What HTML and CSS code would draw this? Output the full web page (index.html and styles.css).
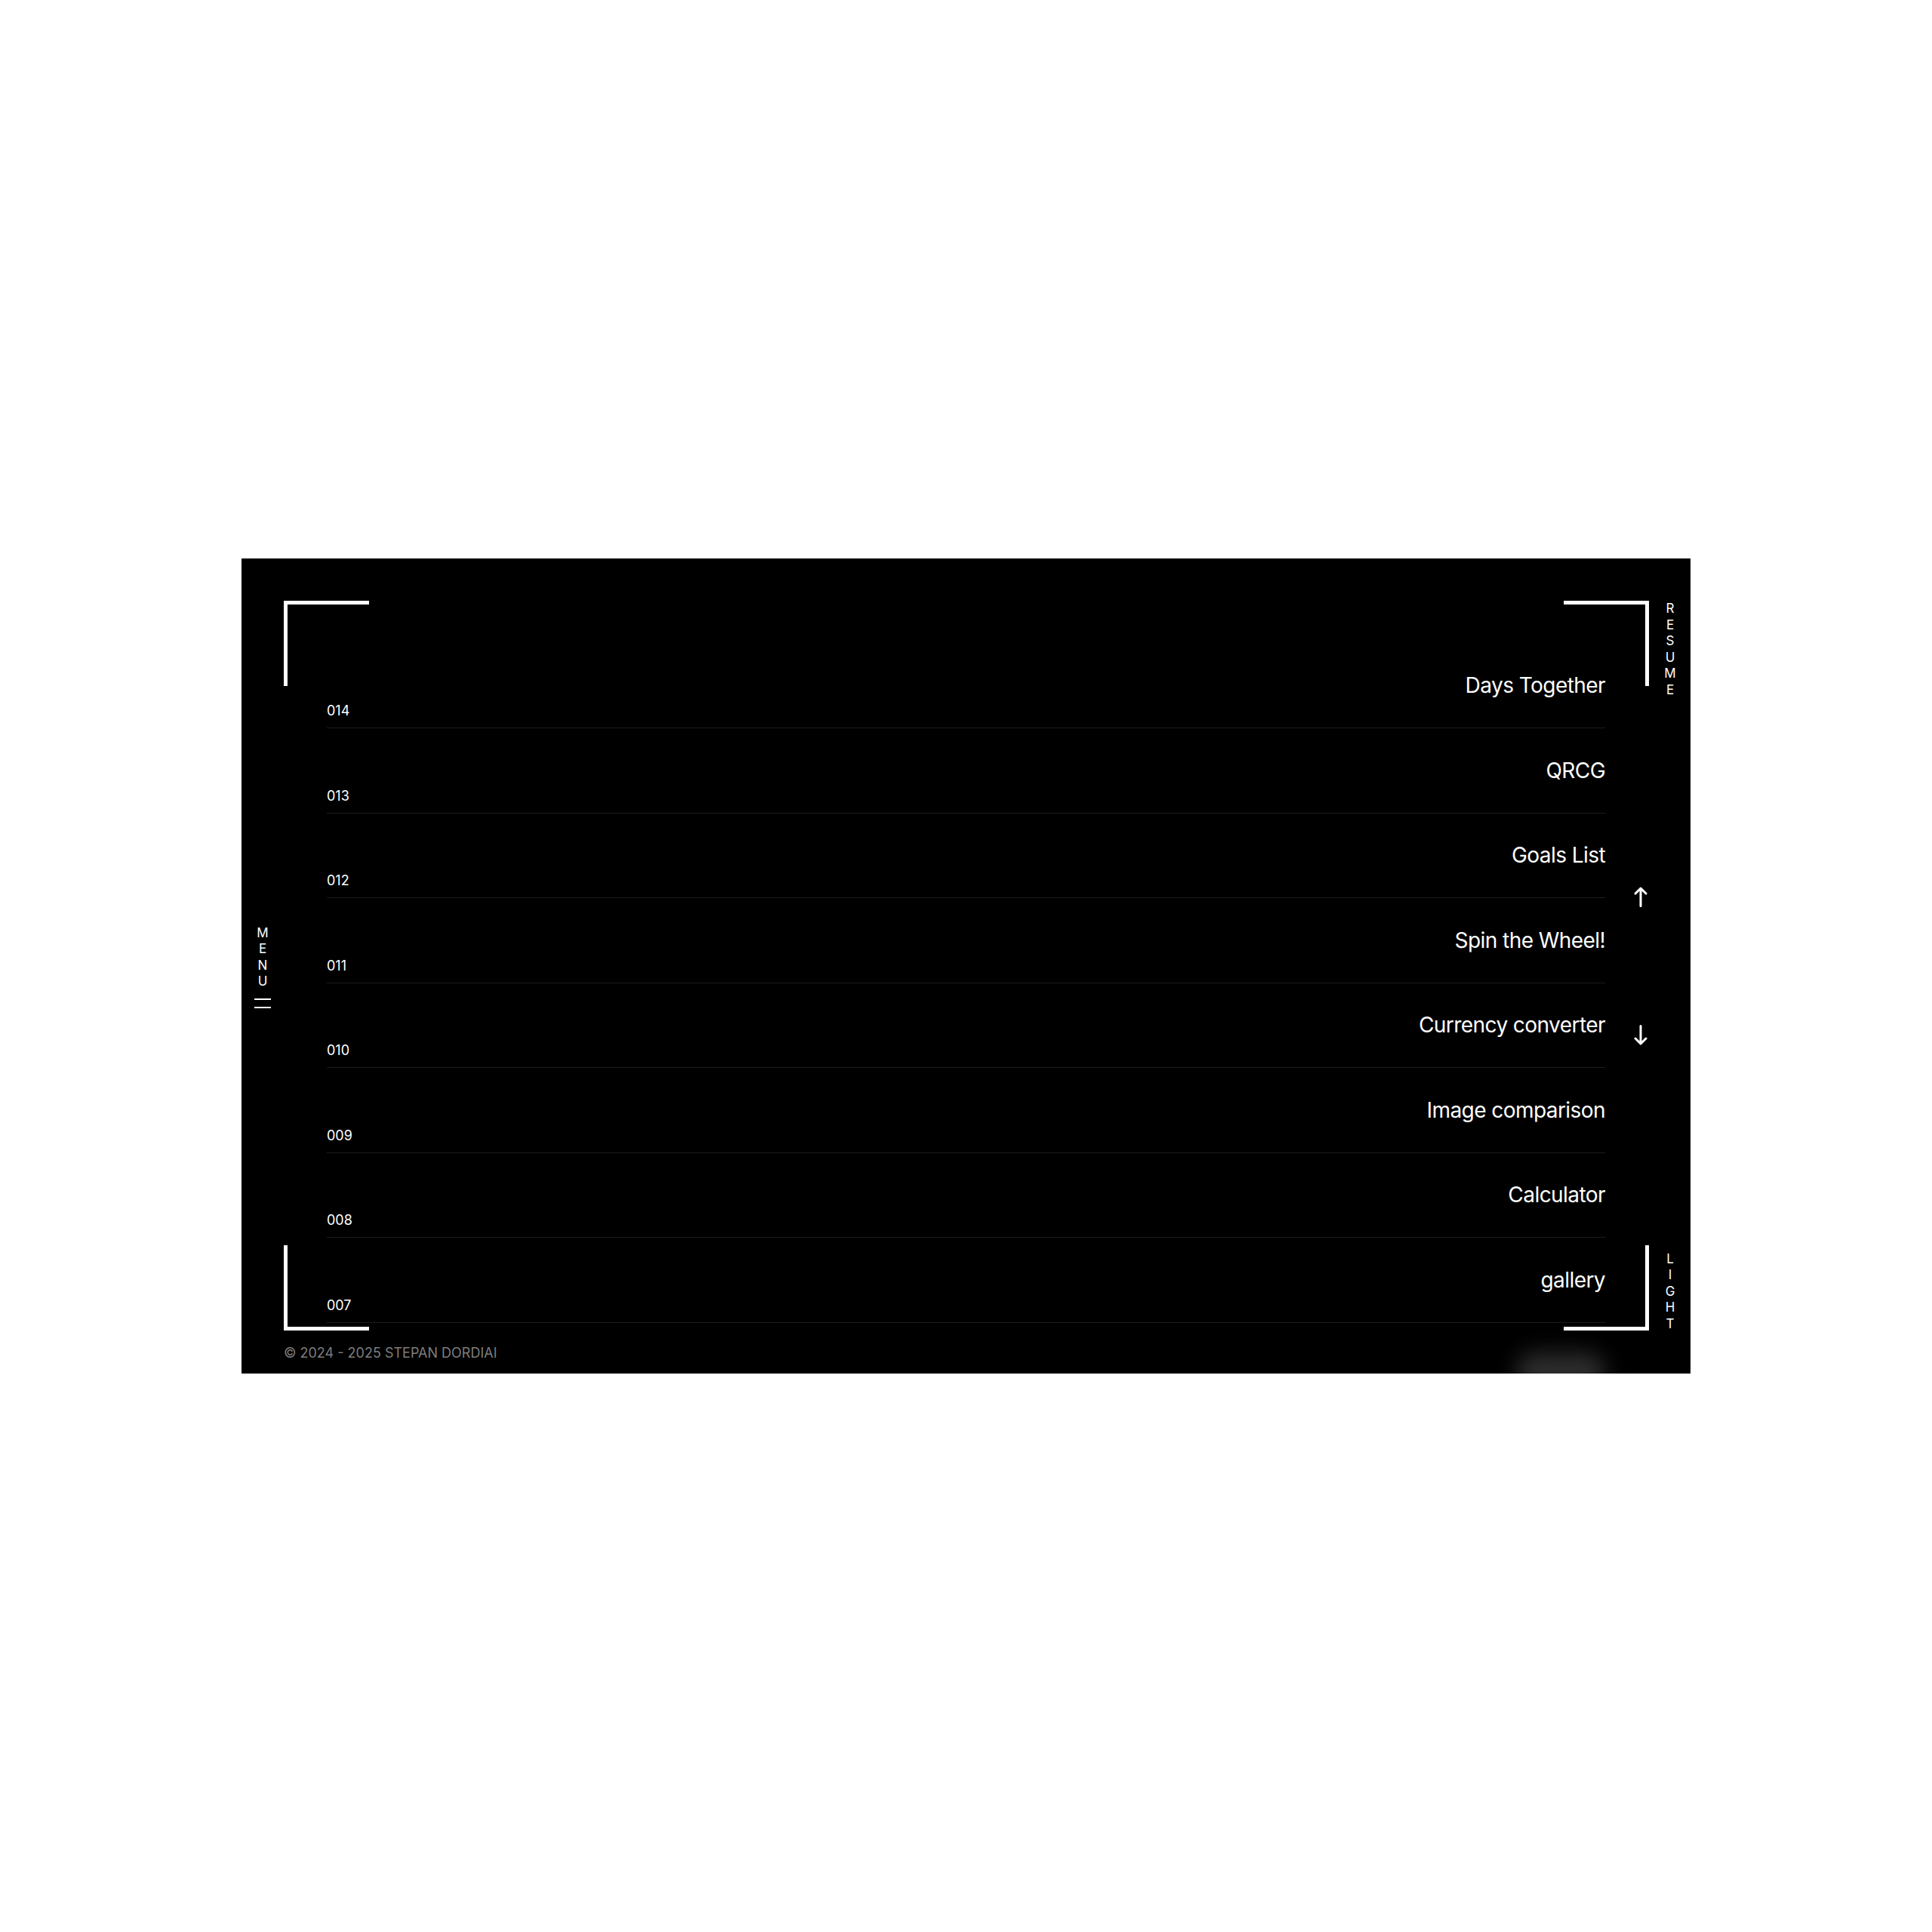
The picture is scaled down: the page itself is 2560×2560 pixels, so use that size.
FILE: index.html
```html
<!DOCTYPE html>
<html lang="en">
<head>
    <meta charset="UTF-8">
    <title>Projects</title>
    <link rel="stylesheet" href="styles.css">
</head>
<body>
    <div id="screen">
        <span class="corner corner-tl"></span>
        <span class="corner corner-tr"></span>
        <span class="corner corner-bl"></span>
        <span class="corner corner-br"></span>

        <aside class="rail rail-left">
            <button class="menu-btn">
                <span class="vtext">
                    <span>M</span><span>E</span><span>N</span><span>U</span>
                </span>
                <span class="burger"><i></i><i></i></span>
            </button>
        </aside>

        <main class="content">
            <ul id="projects-list">
                <li class="project"><span class="num">014</span><span class="title">Days Together</span></li>
                <li class="project"><span class="num">013</span><span class="title">QRCG</span></li>
                <li class="project"><span class="num">012</span><span class="title">Goals List</span></li>
                <li class="project"><span class="num">011</span><span class="title">Spin the Wheel!</span></li>
                <li class="project"><span class="num">010</span><span class="title">Currency converter</span></li>
                <li class="project"><span class="num">009</span><span class="title">Image comparison</span></li>
                <li class="project"><span class="num">008</span><span class="title">Calculator</span></li>
                <li class="project"><span class="num">007</span><span class="title">gallery</span></li>
            </ul>
        </main>

        <aside class="rail rail-right">
            <a class="vtext side-top" href="#">
                <span>R</span><span>E</span><span>S</span><span>U</span><span>M</span><span>E</span>
            </a>
            <div class="arrows">
                <button class="arrow" id="goUp">
                    <svg width="18" height="27" viewBox="0 0 18 27"><path d="M9 25.5V2M2 9L9 2l7 7" /></svg>
                </button>
                <button class="arrow" id="goDown">
                    <svg width="18" height="27" viewBox="0 0 18 27"><path d="M9 1.5V25M2 18l7 7 7-7" /></svg>
                </button>
            </div>
            <a class="vtext side-bottom" href="#">
                <span>L</span><span>I</span><span>G</span><span>H</span><span>T</span>
            </a>
        </aside>

        <p class="copyright">&copy; 2024 - 2025 STEPAN DORDIAI</p>
        <div class="glow"></div>
    </div>
</body>
</html>
```

FILE: styles.css
```css
body{
    margin: 0;
    min-height: 100vh;
    background-color: #fff;
    display: flex;
    align-items: center;
    justify-content: center;
}
#screen{
    width: 1920px;
    height: 1080px;
    background-color: #000;
    color: #fff;
    font-family: Inter, "Liberation Sans", sans-serif;
    display: grid;
    grid-template-columns: 113px 1fr 113px;
    position: relative;
    overflow: hidden;
}
/* frame corners */
.corner{
    position: absolute;
    width: 113px;
    height: 113px;
    box-sizing: border-box;
    border: 0 solid #fff;
    pointer-events: none;
    z-index: 5;
}
.corner-tl{
    top: 56px;
    left: 56px;
    border-top-width: 5px;
    border-left-width: 5px;
}
.corner-tr{
    top: 56px;
    right: 55px;
    border-top-width: 5px;
    border-right-width: 5px;
}
.corner-bl{
    bottom: 57px;
    left: 56px;
    border-bottom-width: 5px;
    border-left-width: 5px;
}
.corner-br{
    bottom: 57px;
    right: 55px;
    border-bottom-width: 5px;
    border-right-width: 5px;
}
/* side rails */
.rail{
    display: grid;
}
.rail > *{
    grid-area: 1 / 1;
}
.vtext{
    display: flex;
    flex-direction: column;
    align-items: center;
    width: 20px;
    font-size: 17px;
    line-height: 21.5px;
    color: #fff;
    text-decoration: none;
}
.menu-btn{
    align-self: center;
    justify-self: start;
    margin: 0 0 -1px 17px;
    padding: 0;
    width: 22px;
    background: none;
    border: none;
    font-family: inherit;
    display: flex;
    flex-direction: column;
    align-items: center;
    cursor: pointer;
}
.burger{
    display: flex;
    flex-direction: column;
    gap: 9px;
    margin-top: 11px;
}
.burger i{
    display: block;
    width: 22px;
    height: 2px;
    background-color: #fff;
}
.side-top{
    align-self: start;
    justify-self: end;
    margin: 56px 17px 0 0;
}
.side-bottom{
    align-self: end;
    justify-self: end;
    margin: 0 17px 55px 0;
}
.arrows{
    align-self: center;
    justify-self: start;
    margin-left: 38px;
    display: flex;
    flex-direction: column;
    gap: 156px;
}
.arrow{
    padding: 0;
    background: none;
    border: none;
    cursor: pointer;
    display: block;
}
.arrow svg{
    display: block;
    fill: none;
    stroke: #fff;
    stroke-width: 3;
    stroke-linecap: round;
    stroke-linejoin: round;
}
/* list */
#projects-list{
    list-style: none;
    margin: 0;
    padding: 112.5px 0 0;
}
.project{
    height: 112.5px;
    box-sizing: border-box;
    border-bottom: 1px solid #1c1c1c;
    display: flex;
    justify-content: space-between;
    align-items: center;
}
.num{
    align-self: flex-end;
    margin-bottom: 11px;
    font-size: 18px;
    line-height: 22px;
}
.title{
    font-size: 28px;
    letter-spacing: -0.56px;
}
.copyright{
    position: absolute;
    left: 56px;
    bottom: 16px;
    margin: 0;
    font-size: 18px;
    line-height: 22px;
    color: #7d7d7d;
}
.glow{
    position: absolute;
    left: 1690px;
    top: 1052px;
    width: 116px;
    height: 60px;
    background-color: #2c2c2c;
    border-radius: 24px;
    filter: blur(14px);
}
```
